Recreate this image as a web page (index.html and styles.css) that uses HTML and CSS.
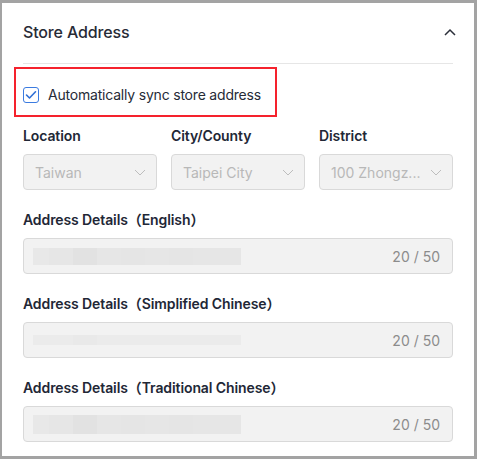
FILE: index.html
```html
<!DOCTYPE html>
<html lang="en">
<head>
<meta charset="utf-8">
<link rel="stylesheet" href="styles.css">
</head>
<body>
<div class="frame">
  <div class="card">
    <div class="card-header">
      <h2 class="title">Store Address</h2>
      <svg class="collapse" width="12" height="8" viewBox="0 0 12 8"><path d="M1 7 L6 2 L11 7" fill="none" stroke="#2b2f3a" stroke-width="1.5"/></svg>
    </div>
    <label class="sync-row">
      <span class="checkbox">
        <svg width="12" height="10" viewBox="0 0 12 10"><path d="M1.5 5 L4.5 8 L10.5 1.8" fill="none" stroke="#2f6fd6" stroke-width="1.6" stroke-linecap="round" stroke-linejoin="round"/></svg>
      </span>
      <span class="sync-label">Automatically sync store address</span>
    </label>

    <div class="selects">
      <div class="field">
        <div class="label">Location</div>
        <div class="select"><span class="select-text">Taiwan</span><svg class="caret" width="12" height="7" viewBox="0 0 12 7"><path d="M1 1 L6 6 L11 1" fill="none" stroke="#bdbdbd" stroke-width="1"/></svg></div>
      </div>
      <div class="field">
        <div class="label">City/County</div>
        <div class="select"><span class="select-text">Taipei City</span><svg class="caret" width="12" height="7" viewBox="0 0 12 7"><path d="M1 1 L6 6 L11 1" fill="none" stroke="#bdbdbd" stroke-width="1"/></svg></div>
      </div>
      <div class="field">
        <div class="label">District</div>
        <div class="select"><span class="select-text">100 Zhongz...</span><svg class="caret" width="12" height="7" viewBox="0 0 12 7"><path d="M1 1 L6 6 L11 1" fill="none" stroke="#bdbdbd" stroke-width="1"/></svg></div>
      </div>
    </div>

    <div class="field block">
      <div class="label">Address Details（English）</div>
      <div class="input"><span class="blur blur-en"></span><span class="count">20 / 50</span></div>
    </div>
    <div class="field block">
      <div class="label">Address Details（Simplified Chinese）</div>
      <div class="input"><span class="blur blur-sc"></span><span class="count">20 / 50</span></div>
    </div>
    <div class="field block">
      <div class="label">Address Details（Traditional Chinese）</div>
      <div class="input"><span class="blur blur-tc"></span><span class="count">20 / 50</span></div>
    </div>
  </div>
</div>
</body>
</html>
```

FILE: styles.css
```css
* { box-sizing: border-box; }
html, body { margin: 0; padding: 0; background: #fff; }
body {
  font-family: Inter, "Noto Sans", "Noto Sans CJK SC", sans-serif;
  color: #1f2433;
}
.frame {
  width: 477px;
  height: 459px;
  border-style: solid;
  border-color: #a3a3a3;
  border-width: 3px 3px 3px 2px;
  overflow: hidden;
}
.card {
  padding: 0 21px;
}
.card-header {
  height: 61px;
  display: flex;
  align-items: center;
  justify-content: space-between;
  border-bottom: 1px solid #e6e6e6;
}
.title {
  margin: 0 0 2px;
  font-size: 16px;
  font-weight: 500;
  color: #272b36;
  letter-spacing: -0.15px;
}
.collapse { margin-right: -3px; margin-bottom: 2px; }
.sync-row {
  display: inline-flex;
  align-items: center;
  gap: 9px;
  margin: 3px 0 0 -9px;
  padding: 17px 14px 12px 7px;
  border: 2px solid #f5222d;
}
.checkbox {
  width: 16px;
  height: 16px;
  border: 1px solid #3b7be0;
  border-radius: 3px;
  display: flex;
  align-items: center;
  justify-content: center;
  background: #fff;
}
.sync-label {
  font-size: 14px;
  color: #262b37;
  line-height: 17px;
  letter-spacing: -0.2px;
}
.selects {
  display: grid;
  grid-template-columns: 134px 134px 134px;
  column-gap: 14px;
  margin-top: 9px;
}
.label {
  font-size: 14px;
  font-weight: 600;
  line-height: 20px;
  color: #222736;
  margin-bottom: 8px;
  white-space: nowrap;
  letter-spacing: -0.1px;
}
.select, .input {
  height: 36px;
  border: 1px solid #d9d9d9;
  border-radius: 4px;
  background: #f2f2f2;
  display: flex;
  align-items: center;
  padding: 0 10px 0 11px;
}
.select-text {
  flex: 1;
  min-width: 0;
  font-size: 14px;
  color: #b8b8b8;
  white-space: nowrap;
  margin-right: 6px;
}
.caret { flex: none; }
.block { margin-top: 20px; }
.input { padding: 0 12px 0 9px; justify-content: space-between; }
.count {
  font-size: 14px;
  color: #8c8c8c;
}
.blur {
  display: block;
  width: 208px;
  height: 17px;
  background: linear-gradient(90deg,
    #e8e8e8 0 16px, #e6e6e6 16px 40px, #e2e2e2 40px 64px, #e6e6e6 64px 88px,
    #e5e5e5 88px 112px, #e6e6e6 112px 136px, #e5e5e5 136px 160px, #e6e6e6 160px 208px);
}
.blur-sc { height: 10px; background: linear-gradient(90deg, #ebebeb 0 40px, #e9e9e9 40px 64px, #ebebeb 64px 208px); }
.blur-tc { height: 19px; }
```
